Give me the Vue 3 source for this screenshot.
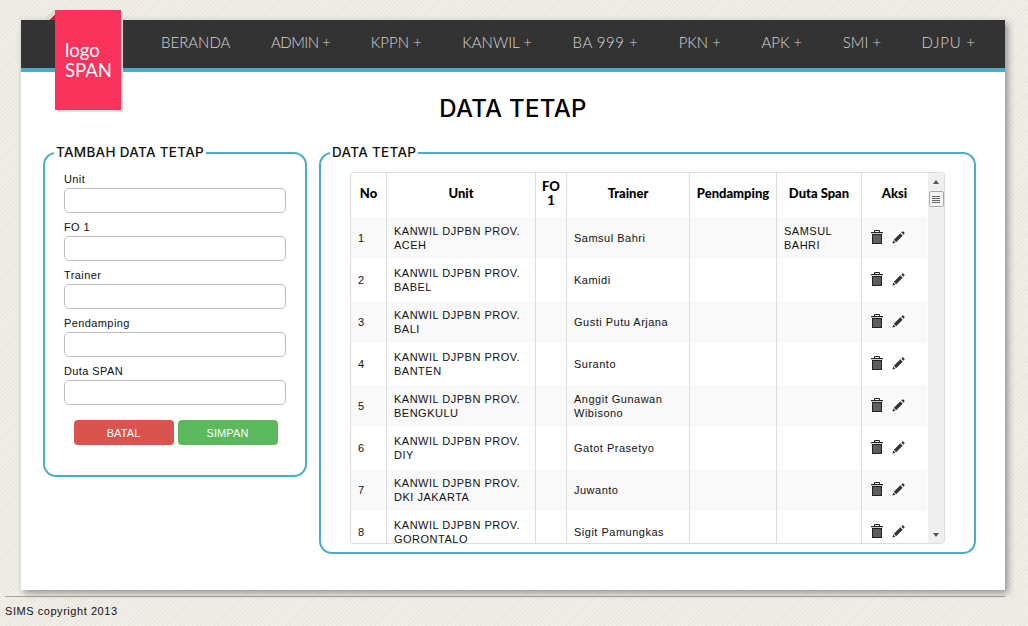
<script setup>
const menu = ['BERANDA', 'ADMIN +', 'KPPN +', 'KANWIL +', 'BA 999 +', 'PKN +', 'APK +', 'SMI +', 'DJPU +']
const fields = ['Unit', 'FO 1', 'Trainer', 'Pendamping', 'Duta SPAN']
const heads = ['No', 'Unit', 'FO 1', 'Trainer', 'Pendamping', 'Duta Span', 'Aksi']
const rows = [
  ['1', 'KANWIL DJPBN PROV. ACEH', 'Samsul Bahri', 'SAMSUL BAHRI'],
  ['2', 'KANWIL DJPBN PROV. BABEL', 'Kamidi', ''],
  ['3', 'KANWIL DJPBN PROV. BALI', 'Gusti Putu Arjana', ''],
  ['4', 'KANWIL DJPBN PROV. BANTEN', 'Suranto', ''],
  ['5', 'KANWIL DJPBN PROV. BENGKULU', 'Anggit Gunawan Wibisono', ''],
  ['6', 'KANWIL DJPBN PROV. DIY', 'Gatot Prasetyo', ''],
  ['7', 'KANWIL DJPBN PROV. DKI JAKARTA', 'Juwanto', ''],
  ['8', 'KANWIL DJPBN PROV. GORONTALO', 'Sigit Pamungkas', '']
]
</script>

<template>
  <div class="page">
    <div class="sheet">
      <a class="logo"><span>logo</span><span>SPAN</span></a>
      <nav class="nav">
        <a v-for="m in menu" :key="m">{{ m }}</a>
      </nav>
      <h1>DATA TETAP</h1>
      <div class="columns">
        <fieldset class="box left">
          <legend>TAMBAH DATA TETAP</legend>
          <label v-for="f in fields" :key="f">
            <span>{{ f }}</span>
            <input type="text" />
          </label>
          <div class="buttons">
            <button class="red">BATAL</button>
            <button class="green">SIMPAN</button>
          </div>
        </fieldset>
        <fieldset class="box right">
          <legend>DATA TETAP</legend>
          <div class="tablebox">
            <div class="viewport">
              <table>
                <colgroup>
                  <col style="width:36px" /><col style="width:149px" /><col style="width:31px" />
                  <col style="width:123px" /><col style="width:87px" /><col style="width:85px" /><col style="width:65px" />
                </colgroup>
                <thead>
                  <tr><th v-for="h in heads" :key="h">{{ h }}</th></tr>
                </thead>
                <tbody>
                  <tr v-for="r in rows" :key="r[0]">
                    <td>{{ r[0] }}</td>
                    <td>{{ r[1] }}</td>
                    <td></td>
                    <td>{{ r[2] }}</td>
                    <td></td>
                    <td>{{ r[3] }}</td>
                    <td class="acts">
                      <svg class="trash" width="12" height="14" viewBox="0 0 12 14">
                        <path d="M3.500 2V.5h5V2" fill="none" stroke="#222" stroke-width="1" />
                        <rect x="0" y="2" width="12" height="1.200" fill="#222" />
                        <path d="M1 4h10v10H1z" fill="#222" />
                        <path d="M3 5v8M5 5v8M7 5v8M9 5v8" stroke="#999" stroke-width="1" />
                      </svg>
                      <svg width="13" height="13" viewBox="0 0 14 14">
                        <path d="M0.500 13.500l.8-3.300 2.500 2.500zM2 9.500l7-7 2.500 2.500-7 7zM10 1.700l1-1c.4-.4.9-.4 1.300 0l1 1c.4.4.4.9 0 1.300l-1 1z" fill="#333" />
                      </svg>
                    </td>
                  </tr>
                </tbody>
              </table>
            </div>
            <div class="scrollbar">
              <i class="up"></i>
              <div class="thumb"><b></b><b></b><b></b><b></b></div>
              <i class="down"></i>
            </div>
          </div>
        </fieldset>
      </div>
    </div>
    <footer>SIMS copyright 2013</footer>
  </div>
</template>

<style>
html, body { margin: 0; height: 100%; }
body { background: #eeebe5; overflow: hidden; }
</style>

<style scoped>
.page {
  width: 1028px;
  height: 626px;
  box-sizing: border-box;
  padding: 20px 23px 0 5px;
  font-family: "Liberation Sans", Arial, sans-serif;
  background: repeating-linear-gradient(135deg, #f1eee8 0 2px, #e9e6df 2px 3px);
  overflow: hidden;
}
.sheet {
  position: relative;
  margin-left: 16px;
  width: 984px;
  height: 570px;
  background: #fff;
  box-shadow: 3px 3px 7px rgba(0, 0, 0, .38);
}
.logo {
  position: absolute;
  left: 34px;
  top: -10px;
  width: 66px;
  height: 100px;
  box-sizing: border-box;
  padding-top: 30px;
  padding-left: 10px;
  background: #f9335c;
  color: #fff;
  font-family: Lato, sans-serif;
  font-size: 18.500px;
  line-height: 20px;
  display: flex;
  flex-direction: column;
  box-shadow: 2px 2px 0 #e3e2dc;
  z-index: 2;
}
.logo::before {
  content: "";
  position: absolute;
  left: -10px;
  top: 0;
  width: 10px;
  height: 10px;
  background: linear-gradient(135deg, transparent 45%, #dedccf 45%, #dedccf 72%, #c4223f 72%);
}
.nav {
  box-sizing: border-box;
  height: 52px;
  background: #333;
  border-bottom: 4px solid #4bacc8;
  display: flex;
  align-items: center;
  gap: 40.500px;
  padding: 0 0 4px 140px;
}
.nav a {
  color: #d6d6d6;
  font-family: Lato, sans-serif;
  font-weight: 300;
  font-size: 15px;
  white-space: nowrap;
}
.nav a:nth-child(2) { letter-spacing: -.5px; }
.nav a:nth-child(5) { letter-spacing: .5px; }
.nav a:nth-child(9) { letter-spacing: .8px; }
h1 {
  margin: 0;
  height: 73px;
  box-sizing: border-box;
  padding-top: 21px;
  text-align: center;
  font-family: Inter, sans-serif;
  font-size: 24px;
  line-height: 32px;
  font-weight: 500;
  letter-spacing: .3px;
  color: #000;
}
.columns {
  display: flex;
  gap: 12px;
  padding-left: 22px;
  align-items: flex-start;
}
.box {
  margin: 0;
  border: 2px solid #4bacc8;
  border-radius: 13px;
  box-sizing: border-box;
  position: relative;
}
.box legend {
  font-family: Inter, sans-serif;
  font-size: 13.500px;
  line-height: 15px;
  font-weight: 500;
  color: #111;
  letter-spacing: .3px;
  padding: 0 2px;
}
.left legend { margin-left: -10px; }
.right legend { margin-left: -20px; }
.left {
  width: 264px;
  height: 332px;
  padding: 0 19px;
}
.left label {
  display: block;
  height: 48px;
  font-size: 11px;
  letter-spacing: .4px;
  color: #111;
}
.left label span {
  display: block;
  height: 17px;
  line-height: 16px;
}
.left label:first-of-type { margin-top: 11px; }
.left input {
  display: block;
  box-sizing: border-box;
  width: 222px;
  height: 25px;
  border: 1px solid #bbb;
  border-radius: 5px;
  background: #fff;
  margin: 0;
  padding: 0;
}
.buttons {
  display: flex;
  gap: 4px;
  justify-content: center;
  margin-top: 9px;
  margin-left: 1px;
}
.buttons button {
  width: 100px;
  height: 25px;
  border: 0;
  border-radius: 4px;
  color: #fff;
  font-family: "Liberation Sans", Arial, sans-serif;
  font-size: 11px;
  letter-spacing: .1px;
  padding: 0;
}
.red { background: #d9534f; }
.green { background: #5cb85c; }
.right {
  width: 657px;
  height: 409px;
  padding: 12px 0 0 29px;
}
.tablebox {
  width: 595px;
  height: 372px;
  box-sizing: border-box;
  border: 1px solid #ddd;
  border-radius: 4px;
  display: flex;
  overflow: hidden;
}
.viewport {
  width: 577px;
  height: 100%;
  overflow: hidden;
}
table {
  border-collapse: separate;
  border-spacing: 0;
  table-layout: fixed;
  width: 576px;
}
th {
  height: 44px;
  padding: 0 5px 4px;
  box-sizing: border-box;
  font-family: Lato, sans-serif;
  font-size: 13px;
  line-height: 14px;
  font-weight: 900;
  color: #000;
  text-align: center;
  border-right: 1px solid #ddd;
}
th:last-child, td:last-child { border-right: 0; }
td {
  height: 42px;
  padding: 0 7px;
  box-sizing: border-box;
  font-size: 11px;
  line-height: 14px;
  letter-spacing: .5px;
  color: #111;
  border-right: 1px solid #ddd;
}
tbody tr:nth-child(odd) td { background: #f9f9f9; }
.acts svg { display: inline-block; vertical-align: middle; }
.acts .trash { margin: 0 9px 0 2px; }
td.acts { padding-bottom: 3px; }
.scrollbar {
  width: 16px;
  flex: none;
  background: #efefef;
  position: relative;
  display: flex;
  flex-direction: column;
  align-items: center;
}
.up, .down {
  display: block;
  width: 0;
  height: 0;
  border-left: 3.500px solid transparent;
  border-right: 3.500px solid transparent;
}
.up { border-bottom: 4px solid #555; margin-top: 7px; margin-bottom: 7px; }
.thumb {
  width: 15px;
  height: 16px;
  box-sizing: border-box;
  border: 1px solid #a9a9a9;
  border-radius: 2px;
  background: #f4f4f4;
  display: flex;
  flex-direction: column;
  justify-content: center;
  gap: 1px;
  align-items: center;
}
.thumb b { display: block; width: 8px; height: 1px; background: #666; }
.down { border-top: 4px solid #555; margin-top: auto; margin-bottom: 6px; }
footer {
  margin-top: 6px;
  width: 1000px;
  border-top: 1px solid #a7a5a2;
  padding-top: 7px;
  font-size: 11px;
  line-height: 14px;
  letter-spacing: .55px;
  color: #111;
}
</style>
